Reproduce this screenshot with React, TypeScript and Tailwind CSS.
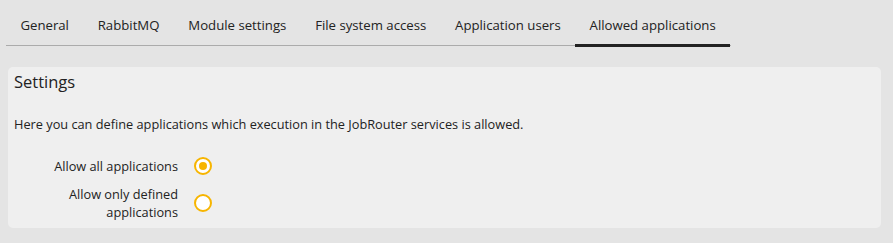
import React from "react";

const tabs = [
  "General",
  "RabbitMQ",
  "Module settings",
  "File system access",
  "Application users",
  "Allowed applications",
];

function Radio({ checked }: { checked?: boolean }) {
  return (
    <div className="w-[18px] h-[18px] rounded-full border-[2.5px] border-[#f7b500] bg-white flex items-center justify-center shrink-0">
      {checked && <div className="w-[8px] h-[8px] rounded-full bg-[#f7b500]" />}
    </div>
  );
}

export default function App() {
  return (
    <div className="w-[893px] h-[243px] bg-[#e4e4e4] font-['Open_Sans',sans-serif] text-[#222] overflow-hidden">
      <div className="ml-[6px] w-[725px] h-[46px] flex border-b border-[#ababab] box-border">
        {tabs.map((t, i) => (
          <div
            key={t}
            className={
              "h-[47px] pt-[8px] px-[14.4px] flex items-center text-[13.2px] border-b-[3px] whitespace-nowrap " +
              (i === tabs.length - 1 ? "border-[#222]" : "border-transparent")
            }
          >
            {t}
          </div>
        ))}
      </div>
      <div className="ml-[8px] mt-[21px] w-[873px] h-[161px] rounded-[5px] bg-[#efefef] pl-[6px] pt-[3px]">
        <div className="text-[16.5px] leading-[23px] text-[#222]">Settings</div>
        <div className="mt-[22px] text-[12.75px] leading-[18px]">
          Here you can define applications which execution in the JobRouter services is allowed.
        </div>
        <div className="mt-[24px] flex items-center gap-[16px]">
          <div className="w-[164px] text-right text-[12.75px] leading-[18px]">Allow all applications</div>
          <Radio checked />
        </div>
        <div className="mt-[10px] flex items-center gap-[16px]">
          <div className="w-[164px] text-right text-[12.75px] leading-[18px] pl-[40px]">
            Allow only defined applications
          </div>
          <Radio />
        </div>
      </div>
    </div>
  );
}
